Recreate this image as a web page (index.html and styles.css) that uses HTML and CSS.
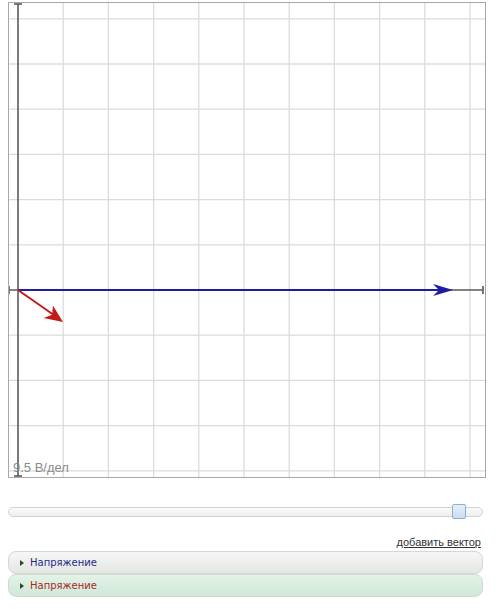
FILE: index.html
```html
<!DOCTYPE html>
<html lang="ru">
<head>
<meta charset="utf-8">
<title>Векторная диаграмма</title>
<link rel="stylesheet" href="styles.css">
</head>
<body>
<div class="app">
  <div class="plot">
    <svg class="plot-svg" width="476" height="474" viewBox="0 0 476 474" xmlns="http://www.w3.org/2000/svg">
      <g class="grid" stroke="#dcdcdc" stroke-width="1.3">
        <line x1="54.2" y1="0" x2="54.2" y2="474"/>
        <line x1="99.4" y1="0" x2="99.4" y2="474"/>
        <line x1="144.6" y1="0" x2="144.6" y2="474"/>
        <line x1="189.8" y1="0" x2="189.8" y2="474"/>
        <line x1="235" y1="0" x2="235" y2="474"/>
        <line x1="280.2" y1="0" x2="280.2" y2="474"/>
        <line x1="325.4" y1="0" x2="325.4" y2="474"/>
        <line x1="370.6" y1="0" x2="370.6" y2="474"/>
        <line x1="415.8" y1="0" x2="415.8" y2="474"/>
        <line x1="461" y1="0" x2="461" y2="474"/>
        <line x1="0" y1="15.8" x2="476" y2="15.8"/>
        <line x1="0" y1="61" x2="476" y2="61"/>
        <line x1="0" y1="106.2" x2="476" y2="106.2"/>
        <line x1="0" y1="151.4" x2="476" y2="151.4"/>
        <line x1="0" y1="196.6" x2="476" y2="196.6"/>
        <line x1="0" y1="241.8" x2="476" y2="241.8"/>
        <line x1="0" y1="332.2" x2="476" y2="332.2"/>
        <line x1="0" y1="377.4" x2="476" y2="377.4"/>
        <line x1="0" y1="422.6" x2="476" y2="422.6"/>
        <line x1="0" y1="467.8" x2="476" y2="467.8"/>
      </g>
      <g class="axes" stroke="#5a5a5a" stroke-width="1.6">
        <line x1="9" y1="1" x2="9" y2="473"/>
        <line x1="5" y1="1" x2="13" y2="1"/>
        <line x1="5" y1="473" x2="13" y2="473"/>
        <line x1="0" y1="287" x2="474" y2="287"/>
        <line x1="0" y1="283" x2="0" y2="291"/>
        <line x1="474" y1="283" x2="474" y2="291"/>
      </g>
      <g class="vec-blue">
        <line x1="9" y1="287" x2="432" y2="287" stroke="#1c1ca8" stroke-width="2"/>
        <path d="M444 287 L424 281 L430 287 L424 293 Z" fill="#1c1ca8"/>
      </g>
      <g class="vec-red">
        <line x1="9" y1="287" x2="47" y2="313.5" stroke="#c41a1a" stroke-width="2"/>
        <path d="M54 319 L34.6 314.9 L43.2 311.7 L43.9 302.4 Z" fill="#c41a1a"/>
      </g>
      <text x="4" y="469" class="scale-label">9.5 В/дел</text>
    </svg>
  </div>

  <div class="slider">
    <div class="slider-track"></div>
    <div class="slider-handle"></div>
  </div>

  <div class="actions">
    <a class="add-link" href="#">добавить вектор</a>
  </div>

  <div class="accordion">
    <div class="acc-item acc-blue">
      <span class="acc-arrow"></span>
      <span class="acc-title title-blue">Напряжение</span>
    </div>
    <div class="acc-item acc-green">
      <span class="acc-arrow"></span>
      <span class="acc-title title-red">Напряжение</span>
    </div>
  </div>
</div>
</body>
</html>
```

FILE: styles.css
```css
html, body {
  margin: 0;
  padding: 0;
  background: #ffffff;
  font-family: "Liberation Sans", Arial, sans-serif;
}

.app {
  width: 478px;
  margin: 2px 0 0 8px;
}

.plot {
  width: 476px;
  height: 474px;
  border: 1px solid #a8a8a8;
  background: #ffffff;
}

.plot-svg {
  display: block;
}

.scale-label {
  font-family: "Liberation Sans", Arial, sans-serif;
  font-size: 13px;
  fill: #8a8a8a;
}

.slider {
  position: relative;
  width: 475px;
  height: 16px;
  margin-top: 26px;
}

.slider-track {
  position: absolute;
  left: 0;
  right: 0;
  top: 3px;
  height: 8px;
  border: 1px solid #cfd4cf;
  border-radius: 5px;
  background: linear-gradient(#fbfbfb, #eeeeee);
}

.slider-handle {
  position: absolute;
  left: 444px;
  top: 0;
  width: 12px;
  height: 13px;
  border: 1px solid #8eaed0;
  border-radius: 2px;
  background: linear-gradient(#e6eef8, #ccdcef);
}

.actions {
  display: flex;
  justify-content: flex-end;
  padding-right: 5px;
  margin-top: 16px;
  height: 14px;
}

.add-link {
  font-size: 11px;
  color: #333333;
  text-decoration: underline;
  line-height: 13px;
}

.accordion {
  width: 475px;
  margin-top: 1px;
  display: flex;
  flex-direction: column;
  gap: 0;
}

.acc-item {
  display: flex;
  align-items: center;
  height: 21px;
  padding-left: 11px;
  border: 1px solid #d2d8d2;
  border-radius: 8px;
  gap: 6px;
}

.acc-blue {
  background: linear-gradient(#f6f7f6, #e3e6e3);
}

.acc-green {
  background: linear-gradient(#e3f2e7, #d0e8d8);
}

.acc-arrow {
  width: 0;
  height: 0;
  border-top: 3.5px solid transparent;
  border-bottom: 3.5px solid transparent;
  border-left: 4px solid #2c4a30;
}

.acc-title {
  font-family: "DejaVu Sans", Verdana, sans-serif;
  font-size: 10px;
}

.title-blue {
  color: #1e2a8c;
}

.title-red {
  color: #a8281e;
}
```
